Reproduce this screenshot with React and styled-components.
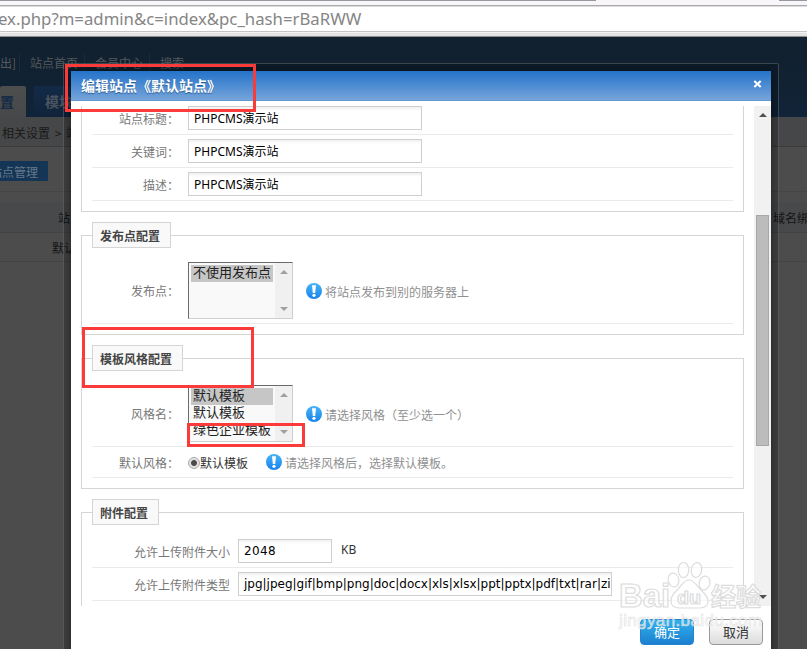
import React from "react";
import styled, { createGlobalStyle, css } from "styled-components";

const cjk = `"Noto Sans CJK SC", sans-serif`;

const Global = createGlobalStyle`
  * { box-sizing: border-box; }
  html, body { margin: 0; padding: 0; overflow: hidden; }
  body { font: 12px/18px ${cjk}; background: #4c4c4c; }
`;

const Screen = styled.div`
  position: relative;
  width: 807px;
  height: 649px;
  overflow: hidden;
  background: #4c4c4c;
  white-space: nowrap;
`;

/* Browser chrome */
const TabStrip = styled.div`
  height: 6px;
  background: linear-gradient(90deg, #97979f 596px, #f8f6f8 596px, #f8f6f8 779px, #97979f 779px) 0 0 / 100% 1px no-repeat, #f8f6f8;
  border-bottom: 1px solid #a9a8aa;
`;
const AddressBar = styled.div`
  height: 26px;
  background: #fff;
  border-top: 1px solid #ddd;
  border-bottom: 1px solid #c4c4c4;
  overflow: hidden;
`;
const Address = styled.span`
  display: block;
  margin-left: -2px;
  font: 16.75px/24px "Noto Sans", sans-serif;
  color: #858585;
`;
const ChromeEdge = styled.div`
  height: 5px;
  background: #e3e3e3;
  border-top: 1px solid #f3f3f3;
  border-bottom: 1px solid #8e8e8e;
`;

/* Dimmed admin page */
const Header = styled.header`
  height: 80px;
  display: flex;
  flex-direction: column;
  justify-content: space-between;
  background: linear-gradient(#112130 30%, #112338);
`;
const TopLinks = styled.nav`
  display: flex;
  padding-top: 17px;
  color: #54595d;
`;
const TopLink = styled.span`
  width: ${(p) => p.$w}px;
  &:not(:last-child) {
    border-right: 1px solid #1c2b38;
    margin-right: 10px;
  }
`;
const MainTabs = styled.div`
  display: flex;
  gap: 8px;
`;
const MainTab = styled.span`
  height: 31px;
  width: ${(p) => (p.$active ? 26 : 80)}px;
  padding-left: ${(p) => (p.$active ? 0 : 11)}px;
  border-radius: 2px 2px 0 0;
  font: bold 14px/31px ${cjk};
  color: ${(p) => (p.$active ? "#152b46" : "#4a545f")};
  background: ${(p) => (p.$active ? "linear-gradient(#4c4d4d, #474849)" : "linear-gradient(#132b48, #10233a)")};
`;
const Breadcrumb = styled.div`
  height: 30px;
  padding-left: 2px;
  line-height: 31px;
  word-spacing: 2px;
  color: #191919;
  background: #464748;
  border-bottom: 1px solid #3a3b3c;
`;
const Toolbar = styled.div`
  height: 45px;
  padding-top: 14px;
  border-bottom: 1px solid #454545;
`;
const ToolButton = styled.span`
  display: flex;
  justify-content: flex-end;
  width: 48px;
  height: 20px;
  overflow: hidden;
  padding-right: 10px;
  line-height: 21px;
  color: #66788a;
  background: #153556;
`;
const TableRow = styled.div`
  display: flex;
  justify-content: space-between;
  margin-top: ${(p) => (p.$head ? 10 : 0)}px;
  height: ${(p) => (p.$head ? 31 : 29)}px;
  padding-left: ${(p) => (p.$head ? 58 : 52)}px;
  line-height: ${(p) => (p.$head ? 31 : 29)}px;
  background: ${(p) => (p.$head ? "#48494b" : "transparent")};
  border-bottom: 1px solid #424344;
  color: #141414;
`;
const Domain = styled.span`
  width: 34px;
  overflow: hidden;
`;

/* Dialog, floating over the page */
const Frame = styled.div`
  position: absolute;
  left: 63px;
  top: 63px;
  width: 716px;
  height: 620px;
  padding: 7px;
  border: 1px solid rgba(125, 130, 135, 0.42);
  border-radius: 2px;
  background: rgba(0, 0, 0, 0.2);
`;
const Dialog = styled.section`
  width: 700px;
  height: 600px;
  background: #fff;
  box-shadow: 0 1px 7px rgba(0, 0, 0, 0.4);
`;
const TitleBar = styled.div`
  display: flex;
  justify-content: space-between;
  height: 30px;
  padding: 0 9px 0 10px;
  font: bold 14px/28px ${cjk};
  color: #fff;
  text-shadow: 0 1px 1px #24588f;
  background: linear-gradient(#2473c9, #76a4db);
  border-bottom: 1px solid #629ad3;
`;
const CloseIcon = styled.svg`
  width: 9px;
  height: 8px;
  margin-top: 9px;
`;
const Viewport = styled.div`
  display: flex;
  justify-content: space-between;
  height: 500px;
  margin-top: 5px;
  overflow: hidden;
`;
const Form = styled.div`
  width: 663px;
  margin: -16px 0 0 10px;
  display: flex;
  flex-direction: column;
  gap: 23px;
`;
const Group = styled.div`
  flex: none;
  padding: 0 10px 10px;
  border: 1px solid #d5d5d5;
`;
const Legend = styled.div`
  width: max-content;
  height: 26px;
  margin: -14px 0 10px;
  padding: 0 10px 0 7px;
  border: 1px solid #d5d5d5;
  background: #f9f9f9;
  color: #444;
  font-weight: bold;
  line-height: 25px;
`;
const FirstRows = styled.div`
  padding-top: 11px;
`;
const Row = styled.div`
  display: flex;
  align-items: center;
  height: ${(p) => p.$h || 33}px;
  border-bottom: 1px solid #ebebeb;
  color: #333;
`;
const Label = styled.span`
  width: ${(p) => (p.$wide ? 146 : 96)}px;
  padding-right: ${(p) => (p.$wide ? 8 : 9)}px;
  padding-top: 1px;
  text-align: right;
  color: #777;
`;
const Field = styled.div`
  width: ${(p) => p.$w}px;
  height: 24px;
  padding-left: 5px;
  border: 1px solid #cfcfcf;
  background: linear-gradient(#f0f0f0, #fff 4px);
  overflow: hidden;
  color: #000;
  line-height: ${(p) => (p.$wideFont ? 22 : 23)}px;
  font-family: ${(p) => (p.$wideFont ? `"DejaVu Sans"` : `"Noto Sans"`)}, ${cjk};
  letter-spacing: ${(p) => p.$spacing || 0}px;
`;
const Unit = styled.span`
  margin: -2px 0 0 9px;
  font-family: "Noto Sans", sans-serif;
`;
const ListBox = styled.div`
  display: flex;
  width: 105px;
  height: 57px;
  border: 1px solid #cfcfcf;
  border-top-color: #6b6b6b;
  border-left-color: #6b6b6b;
  background: #f9f9f9;
  overflow: hidden;
`;
const Options = styled.div`
  width: 86px;
  padding: 2px 2px 0;
`;
const Option = styled.div`
  height: 17px;
  padding-left: 2px;
  font-size: 13px;
  line-height: 13px;
  color: #222;
  ${(p) => p.$selected && css`background: #c6c6c6;`}
`;
const ListScroll = styled.div`
  width: 17px;
  display: flex;
  flex-direction: column;
  align-items: center;
  justify-content: space-between;
  padding: 7px 0 7px;
  background: #f0f0f0;
`;
const Arrow = styled.svg`
  display: block;
  width: 8px;
  height: 4px;
  fill: ${(p) => (p.$dark ? "#505050" : "#a0a0a0")};
`;
const Radio = styled.span`
  width: 12px;
  height: 12px;
  margin-top: 1px;
  border: 1px solid #aaa;
  border-radius: 50%;
  background: radial-gradient(circle, #4c4c4c 2.5px, #e2e2e2 3.5px);
`;
const RadioLabel = styled.span`
  padding-top: 2px;
`;
const TipIcon = styled.svg`
  width: 16px;
  height: 16px;
  margin-left: ${(p) => p.$ml}px;
  margin-right: 3px;
`;
const TipText = styled.span`
  padding-top: 2px;
  color: #909090;
`;
const Scroll = styled.div`
  width: 17px;
  display: flex;
  flex-direction: column;
  align-items: center;
  padding: 7px 0;
  background: #f1f1f1;
`;
const Thumb = styled.div`
  width: 13px;
  height: 231px;
  margin: 98px 0 auto;
  background: #bcbcbc;
  border: 1px solid #a8a8a8;
`;
const Footer = styled.div`
  display: flex;
  justify-content: flex-end;
  gap: 15px;
  padding: 13px 8px 0;
`;
const Button = styled.div`
  width: 54px;
  height: 26px;
  border-radius: 4px;
  text-align: center;
  font-size: 13px;
  line-height: 24px;
  border: 1px solid ${(p) => (p.$primary ? "#2284cf" : "#999")};
  color: ${(p) => (p.$primary ? "#fff" : "#333")};
  background: ${(p) => (p.$primary ? "linear-gradient(#31b2ed, #1c7fcf)" : "linear-gradient(#fff, #dcdcdc)")};
`;

/* Overlays */
const Mark = styled.div`
  position: absolute;
  left: ${(p) => p.$x}px;
  top: ${(p) => p.$y}px;
  width: ${(p) => p.$w}px;
  height: ${(p) => p.$h}px;
  border: 3px solid #fb3a3a;
`;
const Watermark = styled.svg`
  position: absolute;
  left: 610px;
  top: 555px;
  width: 165px;
  height: 85px;
  font-family: "Liberation Sans", ${cjk};
`;

const Up = ({ dark }) => (
  <Arrow $dark={dark} viewBox="0 0 8 4"><path d="M4 0 8 4H0z" /></Arrow>
);
const Down = ({ dark }) => (
  <Arrow $dark={dark} viewBox="0 0 8 4"><path d="M0 0h8L4 4z" /></Arrow>
);

const Tip = ({ ml, children }) => (
  <>
    <TipIcon $ml={ml} viewBox="0 0 16 16">
      <defs>
        <linearGradient id="tip" x2="0" y2="1">
          <stop stopColor="#48b5f5" />
          <stop offset="1" stopColor="#1681ee" />
        </linearGradient>
      </defs>
      <circle cx="8" cy="8" r="8" fill="url(#tip)" />
      <path d="M6 2.3h4L9.2 10H6.8z" fill="#fff" />
      <circle cx="8" cy="12.3" r="1.6" fill="#fff" />
    </TipIcon>
    <TipText>{children}</TipText>
  </>
);

const List = ({ items }) => (
  <ListBox>
    <Options>
      {items.map((t, i) => <Option key={i} $selected={i === 0}>{t}</Option>)}
    </Options>
    <ListScroll><Up /><Down /></ListScroll>
  </ListBox>
);

export default function App() {
  return (
    <Screen>
      <Global />
      <TabStrip />
      <AddressBar><Address>ex.php?m=admin&amp;c=index&amp;pc_hash=rBaRWW</Address></AddressBar>
      <ChromeEdge />

      <Header>
        <TopLinks>
          <TopLink $w={20}>出]</TopLink>
          <TopLink $w={55}>站点首页</TopLink>
          <TopLink $w={55}>会员中心</TopLink>
          <TopLink>搜索</TopLink>
        </TopLinks>
        <MainTabs>
          <MainTab $active>置</MainTab>
          <MainTab>模块</MainTab>
        </MainTabs>
      </Header>
      <Breadcrumb>相关设置 &gt; 站点管理</Breadcrumb>
      <Toolbar><ToolButton>站点管理</ToolButton></Toolbar>
      <TableRow $head><span>站点名</span><Domain>域名绑定</Domain></TableRow>
      <TableRow>默认站点</TableRow>

      <Frame>
        <Dialog>
          <TitleBar>
            编辑站点《默认站点》
            <CloseIcon viewBox="0 0 9 8">
              <path d="M1.3 1 7.7 7M7.7 1 1.3 7" stroke="#fff" strokeWidth="2.1" />
            </CloseIcon>
          </TitleBar>
          <Viewport>
            <Form>
              <Group>
                <FirstRows>
                  <Row><Label>站点标题：</Label><Field $w={234}>PHPCMS演示站</Field></Row>
                  <Row><Label>关键词：</Label><Field $w={234}>PHPCMS演示站</Field></Row>
                  <Row><Label>描述：</Label><Field $w={234}>PHPCMS演示站</Field></Row>
                </FirstRows>
              </Group>
              <Group>
                <Legend>发布点配置</Legend>
                <Row $h={66}>
                  <Label>发布点：</Label>
                  <List items={["不使用发布点"]} />
                  <Tip ml={13}>将站点发布到别的服务器上</Tip>
                </Row>
              </Group>
              <Group>
                <Legend>模板风格配置</Legend>
                <Row $h={66}>
                  <Label>风格名：</Label>
                  <List items={["默认模板", "默认模板", "绿色企业模板"]} />
                  <Tip ml={13}>请选择风格（至少选一个）</Tip>
                </Row>
                <Row $h={31}>
                  <Label>默认风格：</Label>
                  <Radio />
                  <RadioLabel>默认模板</RadioLabel>
                  <Tip ml={18}>请选择风格后，选择默认模板。</Tip>
                </Row>
              </Group>
              <Group>
                <Legend>附件配置</Legend>
                <Row>
                  <Label $wide>允许上传附件大小</Label>
                  <Field $w={94} $wideFont $spacing={0.4}>2048</Field>
                  <Unit>KB</Unit>
                </Row>
                <Row>
                  <Label $wide>允许上传附件类型</Label>
                  <Field $w={374} $wideFont>jpg|jpeg|gif|bmp|png|doc|docx|xls|xlsx|ppt|pptx|pdf|txt|rar|zi</Field>
                </Row>
              </Group>
            </Form>
            <Scroll><Up dark /><Thumb /><Down dark /></Scroll>
          </Viewport>
          <Footer>
            <Button $primary>确定</Button>
            <Button>取消</Button>
          </Footer>
        </Dialog>
      </Frame>

      <Mark $x={65} $y={64} $w={191} $h={48} />
      <Mark $x={82} $y={327} $w={172} $h={61} />
      <Mark $x={187} $y={423} $w={118} $h={24} />

      <Watermark viewBox="0 0 165 85">
        <g fill="#fff" fillOpacity=".6" stroke="#dcdcdc" strokeWidth="1.2" fontWeight="bold">
          <text x="9" y="52" fontSize="33" textLength="51" lengthAdjust="spacingAndGlyphs">Bai</text>
          <ellipse cx="63.5" cy="25" rx="5.3" ry="7" transform="rotate(-12 63.5 25)" />
          <ellipse cx="73.5" cy="15" rx="5.2" ry="7.5" />
          <ellipse cx="86.5" cy="15" rx="5.2" ry="7.5" transform="rotate(10 86.5 15)" />
          <ellipse cx="94.5" cy="28" rx="5.3" ry="7" transform="rotate(15 94.5 28)" />
          <path d="M79 25c-5 0-7 5-11 9s-7 7-7 12c0 4 3 7 8 7h21c5 0 8-3 8-7 0-5-4-8-8-12s-6-9-11-9z" />
          <text x="67" y="49" fontSize="19" textLength="24" lengthAdjust="spacingAndGlyphs">du</text>
          <text x="101" y="51" fontSize="25" textLength="50">经验</text>
        </g>
        <text x="9" y="71" fontSize="17" fill="#fff" fillOpacity=".6" stroke="#dedede" strokeOpacity=".8" strokeWidth=".7" textLength="143">jingyan.baidu.com</text>
      </Watermark>
    </Screen>
  );
}
